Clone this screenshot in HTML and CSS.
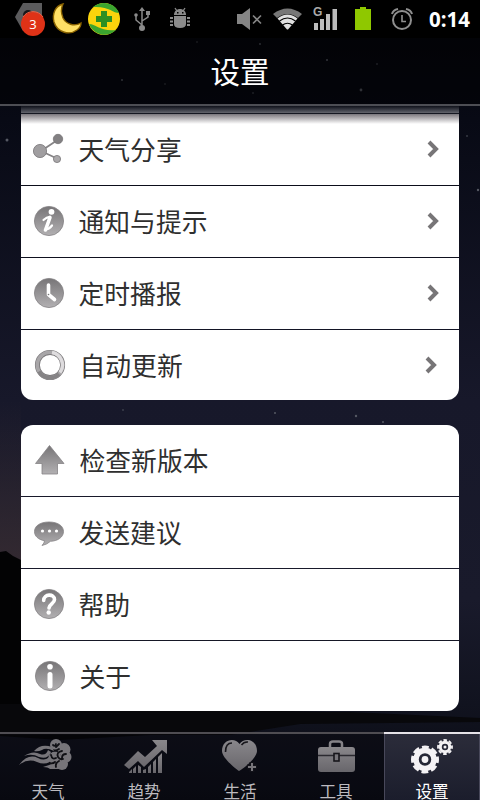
FILE: index.html
```
<!DOCTYPE html>
<html lang="zh-CN">
<head>
    <meta charset="UTF-8">
    <meta name="viewport" content="width=device-width, initial-scale=1.0">
    <title>设置</title>
    <link rel="stylesheet" href="styles.css">
</head>
<body>
    <!-- Night landscape -->
    <svg class="scene" viewBox="0 0 480 800">
        <defs>
            <linearGradient id="sky" x1="0" y1="0" x2="0" y2="1">
                <stop offset="0" stop-color="#040509"/>
                <stop offset=".15" stop-color="#080a15"/>
                <stop offset=".5" stop-color="#17182a"/>
                <stop offset=".75" stop-color="#191a2b"/>
                <stop offset=".88" stop-color="#11131f"/>
                <stop offset="1" stop-color="#090a12"/>
            </linearGradient>
            <linearGradient id="glow" x1="0" y1="0" x2="0" y2="1">
                <stop offset="0" stop-color="#342a31" stop-opacity="0"/>
                <stop offset="1" stop-color="#342a31"/>
            </linearGradient>
            <linearGradient id="gray" x1="0" y1="0" x2="0" y2="1">
                <stop offset="0" stop-color="#777577"/>
                <stop offset="1" stop-color="#b2b0b2"/>
            </linearGradient>
            <linearGradient id="tabGray" x1="0" y1="0" x2="0" y2="1">
                <stop offset="0" stop-color="#89878b"/>
                <stop offset="1" stop-color="#68666b"/>
            </linearGradient>
        </defs>
        <rect width="480" height="800" fill="url(#sky)"/>
        <rect y="400" width="21" height="170" fill="url(#glow)"/>
        <path d="M0 552L6 551L13 556L21 560V706H0Z" fill="#030304"/>
        <path d="M0 704H150Q260 712 350 712L480 718V722L300 724L230 735H0Z" fill="#08080b"/>
        <path d="M0 735H150L60 740L0 736Z" fill="#040406"/>
        <g fill="#565963">
            <circle cx="122" cy="80" r="1"/><circle cx="165" cy="84" r=".7"/>
            <circle cx="327" cy="60" r="1.1"/><circle cx="361" cy="90" r="1.4"/>
            <circle cx="377" cy="64" r=".8"/><circle cx="253" cy="93" r=".8"/>
            <circle cx="260" cy="44" r=".9"/><circle cx="197" cy="42" r=".7"/>
            <circle cx="7" cy="140" r="1.5"/><circle cx="478" cy="190" r="1.2"/>
            <circle cx="467" cy="136" r=".8"/><circle cx="123" cy="410" r=".8"/>
            <circle cx="275" cy="413" r="1"/><circle cx="356" cy="416" r="1.2"/>
            <circle cx="383" cy="422" r="1"/>
        </g>
    </svg>

    <div class="status-bar">
        <svg class="st-tag" width="32" height="38" viewBox="0 0 32 38">
            <path d="M9 3H28V31H9L1 17Z" fill="#5b5b5d"/>
            <circle cx="14" cy="15" r="5" fill="#17171a"/>
            <circle cx="19" cy="24" r="12" fill="#df3217"/>
            <path d="M9 17A12 12 0 0 1 29 17" fill="none" stroke="#f26044" stroke-width="1"/>
            <text x="19" y="29" class="badge-num">3</text>
        </svg>
        <svg class="st-moon" width="34" height="38" viewBox="0 0 34 38">
            <path d="M13 4C5 6 2 14 4 22C7 32 19 36 27 30C30 28 31 26 31 23C24 27 16 24 13 18C11 13 11 8 13 4Z" fill="#ffe065" stroke="#8a6300" stroke-width="1.400"/>
        </svg>
        <svg class="st-safe" width="36" height="38" viewBox="0 0 36 38">
            <circle cx="18" cy="19" r="16" fill="#fbd40c"/>
            <path d="M7 7C15 0 29 2 33 13C27 13 23 6 7 7ZM30 30C22 38 8 36 3 24C10 24 15 32 30 30Z" fill="#3ba52f"/>
            <path d="M15 11H21V16H26V22H21V27H15V22H10V16H15Z" fill="#2b8f22"/>
        </svg>
        <svg class="st-usb" width="22" height="38" viewBox="0 0 22 38">
            <g fill="none" stroke="#8b8b8b" stroke-width="1.500">
                <path d="M10 28V9M10 25L4 20V15M10 21L16 17V13"/>
            </g>
            <path d="M10 7L13 11H7Z" fill="#8b8b8b"/>
            <circle cx="10" cy="28" r="3" fill="#8b8b8b"/>
            <circle cx="4" cy="15" r="1.800" fill="#8b8b8b"/>
            <rect x="14" y="11" width="4" height="4" fill="#8b8b8b"/>
        </svg>
        <svg class="st-bug" width="24" height="38" viewBox="0 0 24 38">
            <g fill="#8b8b8b">
                <path d="M6 15C6 7 18 7 18 15Z"/>
                <path d="M6 16H18V24Q18 28 12 28Q6 28 6 24Z"/>
                <path d="M2 17h3v2h-3zM2 20.500h3v2h-3zM2 24h3v2h-3zM19 17h3v2h-3zM19 20.500h3v2h-3zM19 24h3v2h-3z"/>
            </g>
            <path d="M7 8L9 11M17 8L15 11" stroke="#8b8b8b" stroke-width="1.300"/>
            <path d="M9 12h1.500v1.500H9zM14 12h1.500v1.500H14z" fill="#000"/>
        </svg>
        <svg class="st-mute" width="28" height="38" viewBox="0 0 28 38">
            <path d="M1 14H6L14 8V30L6 24H1Z" fill="#858585"/>
            <path d="M17 15.500L25 23.500M25 15.500L17 23.500" stroke="#858585" stroke-width="1.600"/>
        </svg>
        <svg class="st-wifi" width="32" height="38" viewBox="0 0 32 38">
            <path d="M1 14Q15.500 3 30 14L26 18Q15.500 10 5 18Z" fill="#777"/>
            <path d="M5.500 18.500Q15.500 10.500 25.500 18.500L16 29.500H15Z" fill="#e0e0e0"/>
            <g fill="none" stroke="#000" stroke-width="1.200">
                <path d="M7.500 21Q15.500 15 23.500 21M10.500 25Q15.500 21.500 20.500 25"/>
            </g>
        </svg>
        <svg class="st-signal" width="28" height="38" viewBox="0 0 28 38">
            <g fill="#bcbcbc">
                <rect x="2" y="23" width="4" height="7"/>
                <rect x="8" y="19" width="4" height="11"/>
                <rect x="14" y="14" width="4" height="16"/>
                <rect x="20.500" y="9" width="4.500" height="21"/>
            </g>
            <text x="1" y="16" class="net-type">G</text>
        </svg>
        <svg class="st-battery" width="18" height="38" viewBox="0 0 18 38">
            <path d="M1 9H6V7H12V9H17V30H1Z" fill="#8fc800"/>
        </svg>
        <svg class="st-alarm" width="24" height="38" viewBox="0 0 24 38">
            <g fill="none" stroke="#8f8f8f" stroke-width="2">
                <circle cx="12" cy="20" r="9"/>
                <path d="M2 14Q3 10 8 9M22 14Q21 10 16 9"/>
                <path d="M12 15V21.500H16" stroke-width="1.600"/>
            </g>
        </svg>
        <span class="clock">0:14</span>
    </div>

    <h1 class="title-bar">设置</h1>

    <div class="content">
        <ul class="group group-scrolled">
            <li class="row row-hidden"></li>
            <li class="row">
                <svg class="row-icon" viewBox="0 0 32 32">
                    <path d="M8 18L26 6M8 18L25 26" stroke="#858385" stroke-width="1.800"/>
                    <g stroke="#777577" stroke-width=".8">
                        <circle cx="7" cy="18" r="6.600" fill="#a09ea0"/>
                        <circle cx="25" cy="6" r="4.700" fill="#828082"/>
                        <circle cx="24" cy="26" r="3.600" fill="#aaa8aa"/>
                    </g>
                </svg>
                <span class="label">天气分享</span>
                <svg class="chevron" viewBox="0 0 12 18"><path d="M2 2L9 9L2 16"/></svg>
            </li>
            <li class="row">
                <svg class="row-icon" viewBox="0 0 32 32">
                    <circle cx="16" cy="16" r="14.600" class="disc"/>
                    <circle cx="18.500" cy="6.800" r="2.900" fill="#fff"/>
                    <path d="M10.500 15Q14 11.500 17 11.800Q15 17 13 24Q16 24.500 19 20.500" class="glyph italic-i"/>
                    <path d="M17 12.500L12.500 25" class="glyph"/>
                </svg>
                <span class="label">通知与提示</span>
                <svg class="chevron" viewBox="0 0 12 18"><path d="M2 2L9 9L2 16"/></svg>
            </li>
            <li class="row">
                <svg class="row-icon" viewBox="0 0 32 32">
                    <circle cx="16" cy="16" r="14.600" class="disc"/>
                    <path d="M15.500 8V17.500L21.500 22.500" class="glyph"/>
                    <circle cx="15.500" cy="17.500" r=".8" fill="#777"/>
                </svg>
                <span class="label">定时播报</span>
                <svg class="chevron" viewBox="0 0 12 18"><path d="M2 2L9 9L2 16"/></svg>
            </li>
            <li class="row row-shift">
                <svg class="row-icon" viewBox="0 0 32 32">
                    <circle cx="16" cy="16" r="12.600" fill="none" stroke="#7c7a7c" stroke-width="5"/>
                    <circle cx="16" cy="16" r="12.700" fill="none" stroke="#a8a6a8" stroke-width="3.600"/>
                    <path d="M18 3.500A12.700 12.700 0 0 1 26 23.500" fill="none" stroke="#dedcde" stroke-width="3.400"/>
                    <path d="M5 22.500A12.700 12.700 0 0 0 25 25" fill="none" stroke="#858385" stroke-width="3.600"/>
                </svg>
                <span class="label">自动更新</span>
                <svg class="chevron" viewBox="0 0 12 18"><path d="M2 2L9 9L2 16"/></svg>
            </li>
        </ul>

        <ul class="group">
            <li class="row row-shift">
                <svg class="row-icon" viewBox="0 0 32 32">
                    <path d="M15.500 1.500L30 19.500H23.500V30H8V19.500H1.500Z" class="disc"/>
                </svg>
                <span class="label">检查新版本</span>
            </li>
            <li class="row">
                <svg class="row-icon" viewBox="0 0 32 32">
                    <path d="M16 6C25 6 30.500 10 30.500 15.500C30.500 21 25 25 17.500 25.300Q14 28.500 9 29.500Q11.500 27 11.500 24.700C5 23.500 1.500 20 1.500 15.500C1.500 10 7 6 16 6Z" class="disc"/>
                    <g fill="#fff"><circle cx="9.500" cy="15" r="1.600"/><circle cx="16.500" cy="15" r="1.600"/><circle cx="23.500" cy="15" r="1.600"/></g>
                </svg>
                <span class="label">发送建议</span>
            </li>
            <li class="row">
                <svg class="row-icon" viewBox="0 0 32 32">
                    <circle cx="16" cy="16" r="14.600" class="disc"/>
                    <path d="M10.700 12.500C10.700 5.500 21.500 5.500 21.500 11.500C21.500 15.500 16.500 15.500 16 20" class="glyph"/>
                    <circle cx="15.700" cy="24.500" r="2.200" fill="#fff"/>
                </svg>
                <span class="label">帮助</span>
            </li>
            <li class="row row-shift">
                <svg class="row-icon" viewBox="0 0 32 32">
                    <circle cx="16" cy="16" r="14.600" class="disc"/>
                    <circle cx="16" cy="6.800" r="2.800" fill="#fff"/>
                    <path d="M16 14.500V26" class="glyph about-i"/>
                </svg>
                <span class="label">关于</span>
            </li>
        </ul>
    </div>

    <div class="tabs">
        <div class="tab">
            <svg width="56" height="40" viewBox="0 0 56 40">
                <!-- cloud body -->
                <g fill="#77757a">
                    <circle cx="36" cy="11" r="6"/>
                    <circle cx="44" cy="15.500" r="6.500"/>
                    <circle cx="46" cy="23" r="5.500"/>
                    <circle cx="42" cy="30" r="6"/>
                    <circle cx="35" cy="24" r="6.500"/>
                    <path d="M23 33Q30 31 36 28L40 35H30Q28 33 23 33Z"/>
                </g>
                <!-- swirls cut into the body -->
                <g fill="none" stroke="#101015" stroke-width="1.800" stroke-linecap="round">
                    <path d="M33 11Q35 13 36 10M36 13L39 10M39 15Q35 18 31 15"/>
                    <path d="M42 17Q36 18 38 23Q40 26 43 25M46 20Q42 20 42 24"/>
                    <path d="M31 21Q32 26 36 24M39 27Q35 29 36 33M29 29Q33 30 35 28"/>
                </g>
                <!-- wind -->
                <g fill="#77757a">
                    <path d="M-1 31Q8 19 18 24Q25 28 30 22L32 26Q26 32 17 28Q8 24 -1 31Z"/>
                    <path d="M4 22Q13 16 20 20Q26 22 28 16L31 18Q28 26 19 23Q12 19 4 22Z"/>
                    <path d="M14 17Q21 9 32 13L34 17Q26 13 22 16Q18 18 14 17Z"/>
                </g>
            </svg>
            <span>天气</span>
        </div>
        <div class="tab">
            <svg width="56" height="40" viewBox="0 0 56 40">
                <g fill="url(#tabGray)">
                    <path d="M8 31L22 17L29 23L41 12L36 6H51V20L46 16L28 33L22 27L13 35Z"/>
                    <path d="M13 38L16 35V39H13ZM17 35L20 32V39H17ZM22 31L25 33V39H22ZM27 36L30 35V39H27ZM32 33L35 30V39H32ZM37 28L40 25V39H37ZM42 23L46 19V39H42Z"/>
                </g>
            </svg>
            <span>趋势</span>
        </div>
        <div class="tab">
            <svg width="56" height="40" viewBox="0 0 56 40">
                <path d="M27 37C24 35 10 24 10 17C10 5 23 3 27.500 10C32 3 45 5 45 17C45 24 31 35 27 37Z" fill="url(#tabGray)"/>
                <path d="M13.500 18C13.500 12 16 9 20 9" fill="none" stroke="#17161b" stroke-width="1.600"/>
                <path d="M29.500 11Q32 7.500 36 8" fill="none" stroke="#17161b" stroke-width="1.500"/>
                <path d="M40 28V38M35 33H45" stroke="#111118" stroke-width="5"/>
                <path d="M40 29V37M36 33H44" stroke="#77757a" stroke-width="2"/>
            </svg>
            <span>生活</span>
        </div>
        <div class="tab">
            <svg width="56" height="40" viewBox="0 0 56 40">
                <path d="M22 14V10Q22 7.500 25 7.500H31Q34 7.500 34 10V14" fill="none" stroke="#858388" stroke-width="2.500"/>
                <rect x="10" y="13" width="37" height="25" rx="3" fill="url(#tabGray)"/>
                <path d="M10 21.500H47" stroke="#2b2a30" stroke-width="1.300"/>
                <rect x="26" y="19.500" width="5" height="7.500" fill="#77757a" stroke="#17161b" stroke-width="1.600"/>
            </svg>
            <span>工具</span>
        </div>
        <div class="tab active">
            <svg width="56" height="40" viewBox="0 0 56 40">
                <g fill="none" stroke="#f4f2f4">
                    <circle cx="21" cy="25.500" r="9" stroke-width="5.500"/>
                    <circle cx="21" cy="25.500" r="12.500" stroke-width="3" stroke-dasharray="6.800 3.017" stroke-dashoffset="3.400"/>
                    <circle cx="41" cy="13" r="4.700" stroke-width="3"/>
                    <circle cx="41" cy="13" r="7" stroke-width="1.800" stroke-dasharray="3.600 1.898" stroke-dashoffset="1.800"/>
                </g>
                <circle cx="21" cy="25.500" r="3.400" fill="#f4f2f4"/>
                <circle cx="41" cy="13" r="1.500" fill="#f4f2f4"/>
            </svg>
            <span>设置</span>
        </div>
    </div>
</body>
</html>
```
FILE: styles.css
```
* { box-sizing: border-box; }
body {
    margin: 0;
    width: 480px;
    height: 800px;
    display: flex;
    flex-direction: column;
    overflow: hidden;
    position: relative;
    background-color: #0a0b14;
    font-family: "Noto Sans CJK SC", sans-serif;
}
svg { display: block; flex-shrink: 0; }

/* Background */
.scene { position: absolute; top: 0; left: 0; width: 480px; height: 800px; z-index: -1; }

/* Status bar */
.status-bar {
    display: flex;
    height: 38px;
    flex-shrink: 0;
    padding: 0 10px 0 14px;
    background-color: #000;
}
.st-moon { margin-left: 4px; }
.st-safe { margin-left: 2px; }
.st-usb { margin-left: 10px; }
.st-bug { margin-left: 14px; }
.st-mute { margin-left: 44px; }
.st-wifi { margin-left: 8px; }
.st-signal { margin-left: 8px; }
.st-battery { margin-left: 14px; }
.st-alarm { margin-left: 18px; }
.badge-num { font: 13px "Open Sans", sans-serif; fill: #fff; text-anchor: middle; }
.net-type { font: bold 12px "Liberation Sans", sans-serif; fill: #aaa; }
.clock {
    margin-left: auto;
    font: bold 20.5px/39px "Open Sans", sans-serif;
    color: #fff;
}

/* Title */
.title-bar {
    height: 68px;
    flex-shrink: 0;
    margin: 0;
    border-bottom: 2px solid #4d4e54;
    background-color: rgba(0, 0, 0, 0.45);
    color: #fff;
    font-size: 29.5px;
    font-weight: 400;
    line-height: 64px;
    text-align: center;
}

/* Settings list */
.content {
    position: relative;
    height: 626px;
    flex-shrink: 0;
    padding: 0 21px;
    overflow: hidden;
}
/* Fade under the title while the list is scrolled */
.content::before {
    content: "";
    position: absolute;
    z-index: 1;
    top: 0;
    left: 21px;
    right: 21px;
    height: 18px;
    background: linear-gradient(#10121b 0, #555760 6px, #888489 9px, rgba(255, 255, 255, 0) 100%);
}
.content::after {
    content: "";
    position: absolute;
    z-index: 2;
    top: 7px;
    left: 21px;
    right: 21px;
    height: 1px;
    background-color: #151721;
}
.group {
    list-style: none;
    margin: 0 0 25px;
    padding: 0;
    border-radius: 12px;
    overflow: hidden;
}
.group-scrolled { border-radius: 0 0 12px 12px; }
.row {
    display: flex;
    align-items: center;
    height: 71px;
    margin-bottom: 1px;
    padding: 0 20px 1px 12px;
    background-color: #fff;
}
.row:last-child { height: 70px; margin-bottom: 0; padding-bottom: 0; }
.row-hidden { height: 7px; }
.row-icon { width: 32px; height: 32px; }
.row-shift { padding-left: 13px; padding-right: 22px; }
.label {
    margin-left: 13.5px;
    color: #2f2f2f;
    font-size: 25.8px;
    line-height: 38px;
}
.chevron { width: 12px; height: 18px; margin-left: auto; }
.chevron path { fill: none; stroke: #777577; stroke-width: 4; }
.disc { fill: url(#gray); stroke: #858385; stroke-width: 0.8; }
.glyph { fill: none; stroke: #fff; stroke-width: 3.6; stroke-linecap: round; stroke-linejoin: round; }
.italic-i { stroke-width: 2.2; }
.about-i { stroke-width: 5; }

/* Bottom tabs */
.tabs {
    display: flex;
    height: 68px;
    flex-shrink: 0;
    background-color: rgba(10, 10, 14, 0.35);
}
.tab {
    width: 96px;
    display: flex;
    flex-direction: column;
    align-items: center;
    border-top: 2px solid #4f4d52;
    color: #bcbabf;
    font-size: 16.6px;
    line-height: 18px;
}
.tab span { margin-top: 8px; }
.tab svg { overflow: visible; }
.tab.active {
    border-top-color: #e6e3e8;
    box-shadow: inset 1px 0 #48485a, inset -1px 0 #48485a;
    background: linear-gradient(#2b2c3a, #1b1d2c);
    color: #fff;
}
```
